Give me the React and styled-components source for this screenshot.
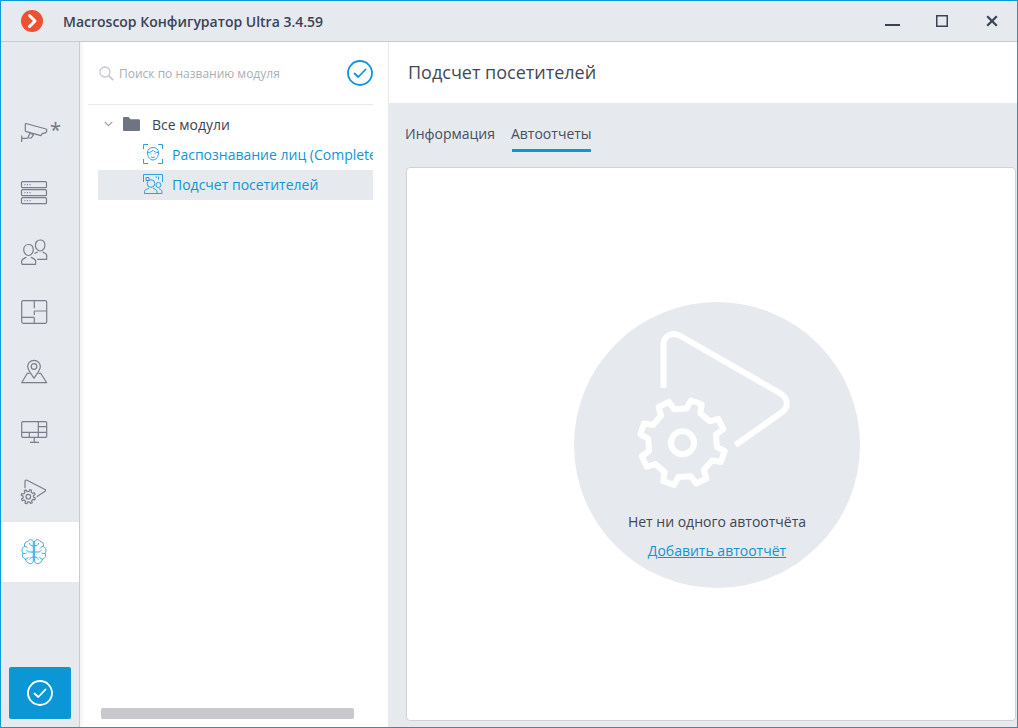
import styled, { createGlobalStyle } from "styled-components"

const GlobalStyle = createGlobalStyle`
    html, body {
        margin: 0;
        padding: 0;
        background: #e6e9ee;
    }
    * {
        box-sizing: border-box;
    }
`

const Window = styled.div`
    width: 1018px;
    height: 728px;
    border: 1px solid #0d9ad6;
    background: #e6e9ee;
    display: flex;
    flex-direction: column;
    overflow: hidden;
    font-family: "Open Sans", "Noto Sans", sans-serif;
    font-size: 14px;
    color: #3c4453;
`
const TitleBar = styled.header`
    height: 41px;
    flex-shrink: 0;
    display: flex;
    align-items: center;
    padding-left: 20px;
    border-bottom: 1px solid #c9cbd1;
`
const AppTitle = styled.div`
    margin-left: 20px;
    font-size: 14px;
    font-weight: 600;
    color: #3a4356;
    flex: 1;
`
const WindowButton = styled.button`
    width: 50px;
    height: 40px;
    border: 0;
    padding: 0;
    background: none;
    display: flex;
    align-items: center;
    justify-content: center;
`
const Body = styled.div`
    flex: 1;
    display: flex;
    min-height: 0;
`
const Sidebar = styled.nav`
    width: 79px;
    flex-shrink: 0;
    padding-top: 60px;
    display: flex;
    flex-direction: column;
    border-right: 1px solid #c9cbd1;
`
const NavItem = styled.div`
    height: 60px;
    flex-shrink: 0;
    padding-left: 19px;
    display: flex;
    align-items: center;
    background: ${(p) => (p.$active ? "#ffffff" : "transparent")};
    color: ${(p) => (p.$active ? "#27a3dc" : "#7a7e8b")};
    & svg {
        overflow: visible;
    }
`
const Star = styled.span`
    margin: -4px 0 0 2px;
    font-size: 20px;
    line-height: 20px;
    color: #6f7380;
`
const ApplyButton = styled.button`
    width: 62px;
    height: 52px;
    margin: auto 0 8px 8px;
    border: 0;
    padding: 0;
    border-radius: 2px;
    background: #0b97d5;
    display: flex;
    align-items: center;
    justify-content: center;
`
const ModulesPanel = styled.aside`
    width: 309px;
    flex-shrink: 0;
    background: #ffffff;
    border-right: 1px solid #e6e9ee;
    box-shadow: inset 5px 0 4px -3px #f0f1f4;
    display: flex;
    flex-direction: column;
`
const SearchRow = styled.div`
    height: 63px;
    flex-shrink: 0;
    margin: 0 15px 0 8px;
    padding: 0 0 0 11px;
    display: flex;
    align-items: center;
    border-bottom: 1px solid #e6e9ee;
`
const SearchText = styled.span`
    margin-left: 5px;
    flex: 1;
    font-size: 12px;
    color: #a9adb4;
`
const Tree = styled.ul`
    flex: 1;
    margin: 5px 15px 0 18px;
    padding: 0;
    list-style: none;
    overflow: hidden;
`
const TreeRow = styled.li`
    height: 30px;
    display: flex;
    align-items: center;
    white-space: nowrap;
    padding-left: ${(p) => p.$indent}px;
    padding-bottom: 2px;
    background: ${(p) => (p.$selected ? "#e6e9ee" : "transparent")};
    color: ${(p) => (p.$link ? "#0f96d4" : "#3c4453")};
    & svg {
        flex-shrink: 0;
    }
`
const RowLabel = styled.span`
    flex-shrink: 0;
    margin-left: ${(p) => p.$gap}px;
`
const Scrollbar = styled.div`
    width: 253px;
    height: 11px;
    margin: 0 0 8px 21px;
    border-radius: 2px;
    background: #c8c8cd;
    flex-shrink: 0;
`
const Content = styled.main`
    flex: 1;
    min-width: 0;
    display: flex;
    flex-direction: column;
`
const ContentHeader = styled.div`
    height: 61px;
    flex-shrink: 0;
    padding: 0 0 2px 19px;
    background: #ffffff;
    display: flex;
    align-items: center;
    font-size: 18px;
    color: #3f4857;
`
const Tabs = styled.div`
    height: 48px;
    margin-top: 7px;
    padding-left: 16px;
    display: flex;
    gap: 16px;
    flex-shrink: 0;
`
const Tab = styled.div`
    height: 42px;
    padding-top: 13px;
    line-height: 22px;
    color: #484f5d;
    background: ${(p) => (p.$active ? "linear-gradient(#0b97d5, #0b97d5) no-repeat 50% 100% / calc(100% - 2px) 3px" : "none")};
`
const Card = styled.section`
    flex: 1;
    margin: 9px 1px 6px 17px;
    padding: 2px 0 0 12px;
    background: #ffffff;
    border: 1px solid #cfd1d6;
    border-radius: 4px;
    display: flex;
    align-items: center;
    justify-content: center;
`
const EmptyCircle = styled.div`
    width: 286px;
    height: 286px;
    border-radius: 50%;
    background: #e6e9ee;
    display: flex;
    flex-direction: column;
    align-items: center;
    padding-top: 26px;
`
const EmptyText = styled.div`
    margin-top: 19px;
    line-height: 20px;
    color: #3f4653;
`
const EmptyLink = styled.a`
    margin-top: 9px;
    line-height: 20px;
    color: #0f96d4;
    text-decoration: underline;
`

// ring with a tick, used by the search row and the apply button
const CheckCircle = ({ size, color, width }) => (
    <svg width={size} height={size} viewBox="0 0 26 26" fill="none" stroke={color} strokeWidth={width}>
        <circle cx="13" cy="13" r="12" />
        <path d="M7.5 13.5l3.8 3.5 7.2-7.5" strokeLinecap="round" strokeLinejoin="round" />
    </svg>
)

// closed outline of a toothed wheel
const gearPath = (cx, cy, outer, root, teeth, rot) => {
    const step = (Math.PI * 2) / teeth
    const pts = []
    for (let i = 0; i < teeth; i++) {
        const a = rot + i * step
        const at = (r, da) => `${(cx + r * Math.cos(a + da * step)).toFixed(2)} ${(cy + r * Math.sin(a + da * step)).toFixed(2)}`
        pts.push(at(root, -0.27), at(outer, -0.17), at(outer, 0.17), at(root, 0.27))
    }
    return `M${pts.join("L")}Z`
}

const Logo = () => (
    <svg width="22" height="22" viewBox="0 0 22 22">
        <circle cx="11" cy="11" r="11" fill="#ee5032" />
        <path d="M8.5 5.5L14 11l-5.5 5.5" fill="none" stroke="#fff" strokeWidth="3" strokeLinecap="round" strokeLinejoin="round" />
    </svg>
)

const MinimizeIcon = () => (
    <svg width="16" height="16" viewBox="0 0 16 16">
        <path d="M1 12h15" stroke="#3a4356" strokeWidth="2" />
    </svg>
)
const MaximizeIcon = () => (
    <svg width="12" height="12" viewBox="0 0 12 12">
        <rect x="0.75" y="0.75" width="10.5" height="10.5" fill="none" stroke="#3a4356" strokeWidth="1.5" />
    </svg>
)
const CloseIcon = () => (
    <svg width="12" height="12" viewBox="0 0 12 12">
        <path d="M1.2 1.2l9.6 9.6M10.8 1.2l-9.6 9.6" stroke="#3a4356" strokeWidth="2.2" />
    </svg>
)

const NavIcon = ({ children, stroke = 1.2 }) => (
    <svg width="28" height="28" viewBox="0 0 28 28" fill="none" stroke="currentColor" strokeWidth={stroke} strokeLinejoin="round">
        {children}
    </svg>
)

const CameraIcon = () => (
    <NavIcon>
        <path d="M6 5.500l20 5.500c.8.300 1 .800.800 1.400l-.7 2.300-4 1-1.200 2-14.600-4c-.6-.2-1-.7-1-1.300V6.200c0-.5.300-.8.700-.7z" />
        <path d="M10 15l-2 4.500c-.3.600-1 .900-1.800.900H1.700M1.700 17.500v6.500" />
        <path d="M10.500 15.500l3 1.200-2.200 3.300h-3" />
    </NavIcon>
)
const ServersIcon = () => (
    <NavIcon>
        <rect x="1.500" y="3.700" width="25" height="6" rx="1" />
        <rect x="1.500" y="11.700" width="25" height="6" rx="1" />
        <rect x="1.500" y="19.700" width="25" height="6" rx="1" />
        <path d="M4.500 6.700h1M7 6.700h1M9.500 6.700h1M4.500 14.700h1M7 14.700h1M9.500 14.700h1M4.500 22.700h1M7 22.700h1M9.500 22.700h1" />
    </NavIcon>
)
const UsersIcon = () => (
    <NavIcon>
        <path d="M8.500 6.500c3 0 4.800 2.300 4.800 5.300 0 2.800-2 5.700-4.800 5.700s-4.800-2.900-4.800-5.700c0-3 1.800-5.300 4.800-5.300z" />
        <path d="M1.700 26.300v-3.300c0-2 3.200-3 4.800-3.800M10.800 19.200c1.600.800 4.800 1.800 4.800 3.800v3.300H1.700" />
        <path d="M20.200 2c3 0 4.700 2.300 4.700 5.200 0 2.800-2 5.800-4.700 5.800s-4.800-3-4.800-5.800c0-2.900 1.800-5.200 4.800-5.200z" />
        <path d="M14.500 15.500c.6-.5 2.300-1.200 3.500-1.500M22.500 14c1.500.600 4.200 1.400 4.200 3.500v3.800h-9.500" />
    </NavIcon>
)
const PlanIcon = () => (
    <NavIcon>
        <rect x="1.700" y="2.700" width="25" height="22.600" rx="1.500" />
        <path d="M14.300 2.700v7.500M14.300 13v4M14.300 19.500v5.800M14.300 13h12.400M1.700 19.300h12.600" />
    </NavIcon>
)
const MapIcon = () => (
    <NavIcon>
        <path d="M14 2.300c3.600 0 6.300 2.700 6.300 6.100 0 3.800-4 8-6.300 11.900-2.300-3.900-6.300-8.100-6.300-11.900 0-3.400 2.700-6.100 6.300-6.100z" />
        <circle cx="14" cy="8.500" r="2.800" />
        <path d="M9.500 15.300H7.300L1.700 24.700h25l-6-9.400h-2.200" />
    </NavIcon>
)
const MonitorIcon = () => (
    <NavIcon>
        <rect x="1.700" y="3.700" width="25" height="15.600" rx="1" />
        <path d="M18.300 3.700v10.600M18.300 8.700h8.400M1.700 14.300h25M9.300 14.300v5M18.300 14.300v5M14.300 19.300v5M10 24.300h9" />
    </NavIcon>
)
const PlaybookIcon = () => (
    <NavIcon>
        <path d="M5 10.300V3.500c0-1.200 1-1.800 2-1.300l18 9.300c.800.500.900 1.300.100 1.800l-8.400 5.400" />
        <path d={gearPath(8.3, 18.7, 7.2, 5.3, 8, 0.33)} />
        <circle cx="8.300" cy="18.700" r="2.300" />
    </NavIcon>
)
const BrainIcon = () => (
    <NavIcon stroke={0.95}>
        <path d="M13.300 3C11.500 1 8.800 1.300 8 3.500 5.500 3.500 4 5.800 4.500 8.300 2 9.800 1.200 13 3 15.200 1.500 17.700 3 20.500 5.500 21c.5 3.200 3.800 5.300 6 4.500.9-.3 1.800-1.200 1.800-2.200V3z" />
        <path d="M14.700 3c1.800-2 4.500-1.700 5.300.5 2.500 0 4 2.300 3.500 4.800 2.500 1.500 3.300 4.700 1.500 6.900 1.500 2.500 0 5.300-2.500 5.800-.5 3.200-3.800 5.300-6 4.500-.9-.3-1.800-1.200-1.800-2.200V3z" />
        <path d="M13.300 8c-2 0-3.500-1-4-3M4.500 8.300c1.500 0 2.700.700 3 2M13.300 14H9.500c-1.500 0-2.500-1-3-2.300M3 15.200c1.300.600 2.500.400 3.500-.3M13.300 19c-2 0-3.300 1-3.800 2.500M5.500 21c1 0 2.300-.6 3-1.800" />
        <path d="M14.700 8c2 0 3.500-1 4-3M23.500 8.300c-1.500 0-2.700.700-3 2M14.700 14h3.800c1.500 0 2.500-1 3-2.300M25 15.200c-1.300.600-2.500.400-3.500-.3M14.700 19c2 0 3.300 1 3.800 2.500M22.500 21c-1 0-2.300-.6-3-1.800" />
    </NavIcon>
)

const SearchIcon = () => (
    <svg width="15" height="15" viewBox="0 0 15 15" fill="none" stroke="#c6c8cd" strokeWidth="1.300">
        <circle cx="6" cy="6" r="5" />
        <path d="M9.700 9.700l4.500 4.500" strokeWidth="1.800" />
    </svg>
)
const ChevronDown = () => (
    <svg width="9" height="6" viewBox="0 0 9 6" fill="none" stroke="#9a9ea8" strokeWidth="1.200">
        <path d="M.7.800l3.800 3.800L8.300.800" />
    </svg>
)
const FolderIcon = () => (
    <svg width="17" height="14" viewBox="0 0 17 14" fill="#6f7483" display="block">
        <path d="M0 1.300C0 .600.500 0 1.200 0h4.300l2 2.200h8.300c.700 0 1.200.600 1.200 1.300v9.200c0 .700-.5 1.300-1.200 1.300H1.200C.500 14 0 13.400 0 12.700z" />
    </svg>
)
const FaceModuleIcon = () => (
    <svg width="20" height="20" viewBox="0 0 20 20" fill="none" stroke="#2ba2da" strokeWidth="1">
        <path d="M.5 5V.5H5M15 .5h4.500V5M.5 15v4.500H5M15 19.500h4.500V15" />
        <path d="M4.500 8.500c0-3 2.300-5 5.500-5s5.500 2 5.500 5c0 4-2.500 7.500-5.500 7.500s-5.500-3.500-5.500-7.500z" />
        <path d="M4.500 8.500c2.300 0 4-.5 5.500-2.200 1 1.500 3.200 2.200 5.500 2.200M7.500 9.800h1M11.500 9.800h1M8 12.800c1 .800 3 .800 4 0" />
    </svg>
)
const VisitorsIcon = () => (
    <svg width="20" height="20" viewBox="0 0 20 20" fill="none" stroke="#2ba2da" strokeWidth="1">
        <path d="M.5 4V.5H19.500V4M.5 4v4M19.500 4v4" />
        <path d="M3 3.500h3v3H3zM12.500 3h1.500M15.500 2.500v3" />
        <circle cx="8" cy="9.500" r="3.800" />
        <circle cx="15.500" cy="11" r="2.500" />
        <path d="M1.500 19.500v-2c0-2 3.500-2.500 4.500-3.500M10 14c1 1 4 1.500 4 3.500v2H1.500M13 19.500h6v-2c0-1.500-1.500-2-3-2.800" />
    </svg>
)
const PlaybookLarge = () => (
    <svg width="165" height="165" viewBox="4.500 0 165 165" fill="none" stroke="#ffffff" strokeWidth="6">
        <path d="M33 60V17C33 8 41 3 50 8l100 57.500c8 5 8.500 14 1 19L105 117" />
        <path d={gearPath(52, 114.7, 43, 34.5, 8, 0.33)} strokeLinejoin="round" />
        <circle cx="52" cy="114.700" r="11.500" />
    </svg>
)

const App = () => {
    return (
        <Window>
            <GlobalStyle />
            <TitleBar>
                <Logo />
                <AppTitle>Macroscop Конфигуратор Ultra 3.4.59</AppTitle>
                <WindowButton><MinimizeIcon /></WindowButton>
                <WindowButton><MaximizeIcon /></WindowButton>
                <WindowButton><CloseIcon /></WindowButton>
            </TitleBar>
            <Body>
                <Sidebar>
                    <NavItem><CameraIcon /><Star>*</Star></NavItem>
                    <NavItem><ServersIcon /></NavItem>
                    <NavItem><UsersIcon /></NavItem>
                    <NavItem><PlanIcon /></NavItem>
                    <NavItem><MapIcon /></NavItem>
                    <NavItem><MonitorIcon /></NavItem>
                    <NavItem><PlaybookIcon /></NavItem>
                    <NavItem $active><BrainIcon /></NavItem>
                    <ApplyButton><CheckCircle size={26} color="#ffffff" width={1.8} /></ApplyButton>
                </Sidebar>
                <ModulesPanel>
                    <SearchRow>
                        <SearchIcon />
                        <SearchText>Поиск по названию модуля</SearchText>
                        <CheckCircle size={26} color="#0f96d4" width={1.8} />
                    </SearchRow>
                    <Tree>
                        <TreeRow $indent={6}>
                            <ChevronDown />
                            <RowLabel $gap={10}><FolderIcon /></RowLabel>
                            <RowLabel $gap={12}>Все модули</RowLabel>
                        </TreeRow>
                        <TreeRow $indent={45} $link>
                            <FaceModuleIcon />
                            <RowLabel $gap={9}>Распознавание лиц (Complete)</RowLabel>
                        </TreeRow>
                        <TreeRow $indent={45} $link $selected>
                            <VisitorsIcon />
                            <RowLabel $gap={9}>Подсчет посетителей</RowLabel>
                        </TreeRow>
                    </Tree>
                    <Scrollbar />
                </ModulesPanel>
                <Content>
                    <ContentHeader>Подсчет посетителей</ContentHeader>
                    <Tabs>
                        <Tab>Информация</Tab>
                        <Tab $active>Автоотчеты</Tab>
                    </Tabs>
                    <Card>
                        <EmptyCircle>
                            <PlaybookLarge />
                            <EmptyText>Нет ни одного автоотчёта</EmptyText>
                            <EmptyLink>Добавить автоотчёт</EmptyLink>
                        </EmptyCircle>
                    </Card>
                </Content>
            </Body>
        </Window>
    )
}

export default App
